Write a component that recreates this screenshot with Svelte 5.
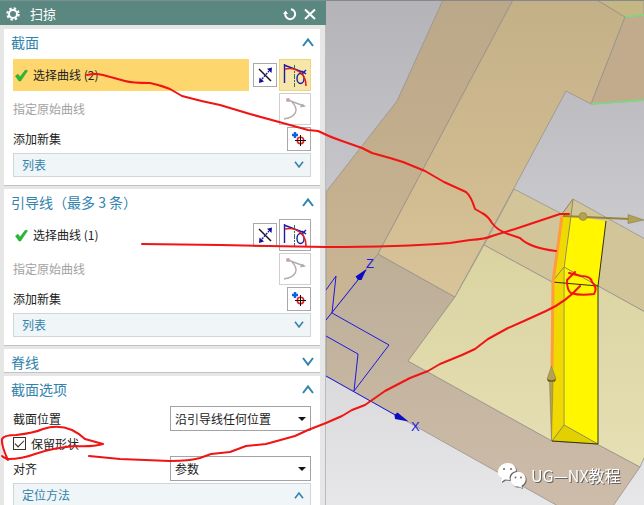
<script lang="ts">
	let curveGroups = $state([
		{ id: 'section', title: '截面', count: 2, active: true },
		{ id: 'guide', title: '引导线（最多 3 条）', count: 1, active: false }
	]);

	let keepShape = $state(true);
	let location = $state('any');
	let align = $state('param');

	const select = (id: string) => {
		curveGroups = curveGroups.map((g) => ({ ...g, active: g.id === id }));
	};
</script>

{#snippet chevron(up, small)}
	<svg class="chevron" class:small viewBox="0 0 12 10" aria-hidden="true">
		<path d={up ? 'M1 9 L6 2.5 L11 9' : 'M1 1 L6 7.5 L11 1'} />
	</svg>
{/snippet}

{#snippet head(title, up)}
	<button class="head">
		<span>{title}</span>
		{@render chevron(up, false)}
	</button>
{/snippet}

{#snippet bar(title, up)}
	<button class="bar">
		<span>{title}</span>
		{@render chevron(up, true)}
	</button>
{/snippet}

<main>
	<aside>
		<header>
			<svg class="gear" viewBox="0 0 14 14" aria-hidden="true">
				<circle class="teeth" cx="7" cy="7" r="5.7" />
				<circle class="ring" cx="7" cy="7" r="4" />
				<circle class="hub" cx="7" cy="7" r="1" />
			</svg>
			<h1>扫掠</h1>
			<button aria-label="重置">
				<svg viewBox="0 0 14 14">
					<path d="M8 2.2 A5 5 0 1 1 2.3 6" />
					<path class="solid" d="M0 7 L2.6 3.5 L5 7 Z" />
				</svg>
			</button>
			<button aria-label="关闭">
				<svg viewBox="0 0 14 14"><path d="M2 2.5 L12 12 M12 2.5 L2 12" /></svg>
			</button>
		</header>

		<div class="sections">
			{#each curveGroups as group (group.id)}
				<section>
					{@render head(group.title, true)}
					<div class="body">
						<div class="row tall">
							<button class="pick" class:active={group.active} onclick={() => select(group.id)}>
								<svg class="tick" viewBox="0 0 13 13" aria-hidden="true">
									<path d="M0.5 7 L3 5.2 L5 8 L10.5 1 L12.5 1.8 L5.6 12 L4 12 Z" />
								</svg>
								<span>选择曲线 ({group.count})</span>
							</button>
							<button class="tool small" aria-label="反向">
								<svg viewBox="0 0 22 22">
									<path class="black" d="M5 5 L17 17" />
									<path class="dash" d="M8 15 L15 7" />
									<path class="navy" d="M18 3.5 L17.5 9 L13 4.8 Z M5 19 L5.5 13.5 L10 17.6 Z" />
								</svg>
							</button>
							<button class="tool" class:active={group.active} aria-label="曲线规则">
								<svg viewBox="0 0 30 30">
									<path class="blue" d="M4.5 4 V23 M4 5 L25 13 M22 11 L26 14 M26 10 L22 14" />
									<ellipse class="blue" cx="20.5" cy="18.5" rx="3.5" ry="5" />
									<path class="green" d="M14.5 5 V27" />
									<path class="red" d="M5 9 Q14 7 21 13 Q26 18 26 26" />
								</svg>
							</button>
						</div>
						<div class="row tall">
							<span class="off">指定原始曲线</span>
							<button class="tool" disabled aria-label="指定原始曲线">
								<svg viewBox="0 0 30 30">
									<path class="grey" d="M8 6 L24 12 M12 8 C19 15 17 23 4 25" />
									<path class="greyfill" d="M26 12.5 L20 13.5 L22 9.5 Z" />
									<circle class="rose" cx="8" cy="6" r="2" />
								</svg>
							</button>
						</div>
						<div class="row">
							<span>添加新集</span>
							<button class="tool small" aria-label="添加新集">
								<svg viewBox="0 0 22 22">
									<path class="plus" d="M7 4 V10 M4 7 H10" />
									<circle class="red" cx="12.5" cy="12.5" r="3.2" />
									<path class="black thin" d="M12.5 7 V18 M7 12.5 H18" />
								</svg>
							</button>
						</div>
						{@render bar('列表', false)}
					</div>
				</section>
			{/each}

			<section>
				{@render head('脊线', false)}
			</section>

			<section>
				{@render head('截面选项', true)}
				<div class="body options">
					<div class="field">
						<label for="location">截面位置</label>
						<div class="combo">
							<select id="location" bind:value={location}>
								<option value="any">沿引导线任何位置</option>
								<option value="end">引导线末端</option>
							</select>
						</div>
					</div>
					<div class="field">
						<label class="check">
							<input type="checkbox" bind:checked={keepShape} />
							保留形状
						</label>
					</div>
					<div class="field">
						<label for="align">对齐</label>
						<div class="combo">
							<select id="align" bind:value={align}>
								<option value="param">参数</option>
								<option value="arc">弧长</option>
							</select>
						</div>
					</div>
					<div class="method">{@render bar('定位方法', true)}</div>
				</div>
			</section>
		</div>
	</aside>

	<svg class="scene" viewBox="326 1 318 504" preserveAspectRatio="xMinYMin slice">
		<defs>
			<linearGradient id="sky" x1="0" y1="0" x2="0" y2="1">
				<stop offset="0" stop-color="#b3b3b8" />
				<stop offset="1" stop-color="#e7e7e9" />
			</linearGradient>
			<linearGradient id="wall" x1="0" y1="0" x2="0" y2="1">
				<stop offset="0" stop-color="#bba888" />
				<stop offset="1" stop-color="#cbb594" />
			</linearGradient>
			<linearGradient id="top" x1="0" y1="0" x2="0" y2="1">
				<stop offset="0" stop-color="#c4b087" />
				<stop offset="1" stop-color="#d9c398" />
			</linearGradient>
			<linearGradient id="base" x1="0" y1="0" x2="0" y2="1">
				<stop offset="0" stop-color="#bdae98" />
				<stop offset="1" stop-color="#ccbca9" />
			</linearGradient>
			<linearGradient id="slab" x1="0" y1="0" x2="0" y2="1">
				<stop offset="0" stop-color="#dad3a1" />
				<stop offset="1" stop-color="#e5dfb4" />
			</linearGradient>
		</defs>
		<rect x="326" width="318" height="505" fill="url(#sky)" />

		<!-- solid faces -->
		<g class="faces">
			<polygon fill="url(#wall)" points="443,0 513,0 378,254 326,320 326,192 397,101" />
			<polygon fill="url(#base)" points="378,254 455,297 408,361 552,441 597,444 640,467 613,506 558,506 326,376 326,320" />
			<polygon fill="url(#top)" points="513,0 597,0 625,17 591,104 566,91 513,190 455,297 378,254" />
			<polygon fill="#c5b783" points="597,0 644,0 644,15 625,17" />
			<polygon fill="#c1ab8c" points="625,17 645,15 645,100 591,104" />
			<polygon fill="#d3c59a" points="514,189 562,214 573,199 645,239 645,312 598,286 552,282 484,245" />
			<polygon fill="url(#slab)" points="484,245 552,282 598,286 645,312 645,456 640,467 597,444 552,441 408,361 455,297" />
		</g>
		<path class="green" d="M625 17 L644 15 M591 104 L644 100" />

		<!-- swept body -->
		<polygon fill="#cfc08b" points="562,214 573,199 571,216" />
		<polygon fill="#efd900" points="562,214 571,216 563,267 563,425 552,441 552,282" />
		<polygon fill="#fff600" points="571,216 606,221 598,286 598,444 563,425 563,267" />
		<polygon fill="#e2d000" points="563,425 598,444 552,441" />
		<path class="edge" d="M573 199 L571 216 L564 268 V425 L552 441 M564 425 L598 444 M552 282 L564 267 L598 286 M573 199 L562 214" />
		<path class="dark" d="M606 221 L598 286 V444 L552 441 M552 282 L598 286" />
		<path class="guide" d="M562 216 L553 282 L552 367" />

		<!-- direction handles -->
		<path class="stem" d="M563 216 L630 219" />
		<path class="cone" d="M628 214.5 L644 220 L628 223.5 Z" />
		<circle class="cone" cx="583" cy="216.5" r="4" />
		<path class="cone" d="M549.5 381 H553 L551.5 441 Z" />
		<path class="cone" d="M551.5 366 L556 379 Q551.5 382 547 379 Z" />
		<path class="shade" d="M547 379 Q551.5 382 556 379 L555 381.5 H548 Z" />

		<!-- coordinate system -->
		<path class="axis" d="M326 320 L366 270 M326 290 L336 276 L332 313 L389 345 L354 391 L358 354 L326 336 M326 376 L397 416" />
		<path class="tip" d="M366.5 269 L361.5 280 L358 280 L355.5 276.5 Z M408.5 421.5 L395 419 L394.5 415 L397.5 412.5 Z" />
		<text class="name" x="366" y="268">Z</text>
		<text class="name" x="411" y="431">X</text>

		<!-- watermark -->
		<g class="mark">
			<path d="M507.5 463 C513 463 516 466.5 516 471 C511 472 508.5 476 510 480 L505 479.5 L501 482 L501.5 478.5 C494 474 499 463 507.5 463 Z" />
			<path d="M518 472 C527 472 528 483 521.5 485.5 L522 488 L518.5 486.5 C509 488 508 472 518 472 Z" />
			<circle cx="504" cy="469" r="1.1" />
			<circle cx="511" cy="469" r="1.1" />
			<circle cx="515.5" cy="477.5" r="1" />
			<circle cx="521" cy="477.5" r="1" />
			<text x="531" y="482">UG—NX教程</text>
		</g>
	</svg>

	<!-- hand-drawn notes linking the options to the model -->
	<svg class="notes" viewBox="0 0 644 505" preserveAspectRatio="xMinYMin meet" aria-hidden="true">
		<path d="M87 75 Q95 73 103 75 L125 81 Q132 83 150 83 Q160 85 170 89 L182 96 Q200 101 220 105 L250 114 L290 125 L308 130 L318 131 Q330 137 342 141 L362 148 L372 153 L390 158 L403 162 L425 171 L444 182 L466 192 Q471 196 475 209 L482 213 Q488 216 492 223 Q497 230 508 234 L520 238 Q530 248 556 251" />
		<path d="M142 244 L220 245 L326 247 Q400 247 450 243 L470 240 Q486 239 492 236 L515 229 L560 214 H569" />
		<path d="M89 456 L120 459 L170 461 Q190 461 200 458 L211 454 L230 452 L246 446 L266 444 L295 436 L308 430 L326 423 L342 416 L352 410 L365 405 L385 391 L410 378 L428 371 L440 364 L462 355 L475 349 L488 339 L508 328 L524 321 L535 316 L546 311 Q566 302 580 286" />
		<path d="M575 272 L567 280 Q567 291 571 293 Q580 296 594 294 Q598 288 592 282 Q591 276 581 276 L569 273" />
		<path d="M2 456 L8 460 Q1 445 2 439 Q4 435 16 435 Q34 433 43 429 Q58 424 72 430 Q80 434 85 439 L103 444 Q92 447 75 446 Q52 448 35 454 Q22 459 8 459 L3 457" />
	</svg>
</main>

<style>
	:global(body) {
		margin: 0;
	}
	main {
		position: relative;
		display: flex;
		height: 100vh;
		overflow: hidden;
		background: #e6e6e7;
		color: #222;
		font: 12px/16px 'Noto Sans CJK SC', sans-serif;
	}
	button,
	select {
		margin: 0;
		padding: 0;
		border: 0;
		background: none;
		color: inherit;
		font: inherit;
		text-align: left;
		cursor: pointer;
	}
	aside {
		flex: 0 0 326px;
		box-sizing: border-box;
		border-right: 1px solid #b9babb;
	}
	header {
		display: flex;
		align-items: center;
		gap: 6px;
		box-sizing: border-box;
		height: 25px;
		margin-right: -1px;
		padding: 2px 9px 0 6px;
		border-top: 1px solid #7c918f;
		background: #5b8781;
		color: #fff;
	}
	header svg {
		display: block;
		width: 14px;
		height: 14px;
		fill: none;
		stroke: #fff;
		stroke-width: 2;
	}
	header .solid {
		fill: #fff;
		stroke: none;
	}
	.gear .teeth {
		stroke-width: 2;
		stroke-dasharray: 2.4 2.08;
	}
	.gear .hub {
		stroke: none;
	}
	h1 {
		flex: 1;
		margin: 0 0 0 4px;
		font-size: 13px;
		font-weight: 400;
		line-height: 18px;
	}
	.sections {
		display: grid;
		gap: 3px;
		padding: 4px 5px 0 4px;
	}
	section {
		border-bottom: 1px solid #c2c3c5;
		background: #fff;
	}
	.head,
	.bar {
		display: flex;
		align-items: center;
		justify-content: space-between;
		width: 100%;
		box-sizing: border-box;
		color: #3184ad;
	}
	.head {
		height: 23px;
		padding: 2px 6px 0 7px;
		font-size: 14px;
		line-height: 20px;
	}
	.bar {
		height: 24px;
		padding: 0 6px 0 8px;
		border: 1px solid #d0d5d7;
		background: #f0f5f7;
	}
	.chevron {
		width: 12px;
		height: 10px;
		fill: none;
		stroke: #3184ad;
		stroke-width: 2;
	}
	.chevron.small {
		width: 10px;
		height: 8px;
	}
	.body {
		display: grid;
		gap: 2px;
		padding: 7px 9px 8px;
	}
	.row {
		display: flex;
		align-items: center;
		justify-content: space-between;
		gap: 2px;
		height: 24px;
	}
	.tall {
		height: 32px;
	}
	.off {
		color: #a2a2a2;
	}
	.pick {
		display: flex;
		flex: 1;
		align-items: center;
		gap: 5px;
		height: 32px;
		margin-right: 2px;
		padding-left: 2px;
	}
	.pick.active {
		background: #fdd66e;
	}
	.tick {
		width: 13px;
		height: 13px;
		fill: #26bd35;
		stroke: #14942a;
		stroke-width: 0.5;
	}
	.tool {
		width: 32px;
		height: 32px;
		box-sizing: border-box;
		border: 1px solid #a9a9ac;
		background: #fff;
	}
	.tool.small {
		width: 24px;
		height: 24px;
	}
	.tool.active {
		border-color: #efd37d;
		background: #f6e6a9;
	}
	.tool:disabled {
		border-color: #cfcfcf;
	}
	.tool svg {
		display: block;
		fill: none;
		stroke-width: 1.4;
	}
	.tool .black {
		stroke: #111;
	}
	.tool .thin {
		stroke-width: 1;
	}
	.tool .blue,
	.tool .dash {
		stroke: #1c1ca8;
	}
	.tool .dash {
		stroke-dasharray: 2 1;
	}
	.tool .navy {
		fill: #10108f;
	}
	.tool .green {
		stroke: #27765a;
		stroke-width: 1;
		stroke-dasharray: 5 1 2 1;
	}
	.tool .red {
		stroke: #e02020;
		stroke-width: 1.6;
	}
	.tool .grey {
		stroke: #b1abad;
	}
	.tool .greyfill {
		fill: #b1abad;
	}
	.tool .rose {
		fill: #c9a3aa;
	}
	.tool .plus {
		stroke: #0a62e0;
		stroke-width: 2.4;
	}
	.options {
		gap: 0;
	}
	.field {
		display: flex;
		align-items: center;
		justify-content: space-between;
		height: 25px;
	}
	.combo {
		position: relative;
		width: 141px;
	}
	.combo::after {
		content: '';
		position: absolute;
		top: 11px;
		right: 5px;
		border: 4px solid transparent;
		border-top-color: #111;
		border-bottom: 0;
		pointer-events: none;
	}
	select {
		display: block;
		width: 100%;
		height: 25px;
		box-sizing: border-box;
		padding-left: 4px;
		border: 1px solid #a3a3a6;
		border-radius: 0;
		background: #fff;
		appearance: none;
	}
	.check {
		display: flex;
		align-items: center;
		gap: 5px;
	}
	.check input {
		display: grid;
		place-items: center;
		width: 13px;
		height: 13px;
		box-sizing: border-box;
		margin: 0;
		border: 1px solid #333;
		background: #fff;
		appearance: none;
	}
	.check input:checked::after {
		content: '';
		width: 9px;
		height: 5px;
		box-sizing: border-box;
		margin-bottom: 2px;
		border: solid #222;
		border-width: 0 0 1px 1px;
		transform: rotate(-45deg);
	}
	.method {
		padding-top: 2px;
	}
	.scene {
		flex: 1;
		min-width: 0;
		height: 100%;
		box-sizing: border-box;
		border-top: 1px solid #85898c;
	}
	.faces {
		stroke: #98928b;
		stroke-width: 0.8;
	}
	.scene .green {
		stroke: #86d184;
		stroke-width: 2;
	}
	.edge,
	.dark,
	.guide,
	.axis {
		fill: none;
	}
	.edge {
		stroke: #918a55;
	}
	.dark {
		stroke: #33300c;
	}
	.guide {
		stroke: #ff9c3b;
		stroke-width: 3;
	}
	.stem {
		stroke: #96843c;
		stroke-width: 2;
	}
	.cone {
		fill: #b3a154;
		stroke: #85753a;
		stroke-width: 0.5;
	}
	.shade {
		fill: #54481d;
	}
	.axis {
		stroke: #1a1ae0;
	}
	.tip {
		fill: #0c0cc4;
	}
	.name {
		fill: #1a1ae0;
		font: 13px 'Liberation Sans', sans-serif;
	}
	.mark {
		fill: #fff;
		filter: drop-shadow(1px 1px 0 #666);
	}
	.mark circle {
		fill: #77706a;
	}
	.mark text {
		font-size: 16px;
	}
	.notes {
		position: absolute;
		top: 0;
		left: 0;
		width: 100%;
		fill: none;
		stroke: #f01414;
		stroke-width: 2;
		stroke-linecap: round;
		stroke-linejoin: round;
		pointer-events: none;
	}
</style>
